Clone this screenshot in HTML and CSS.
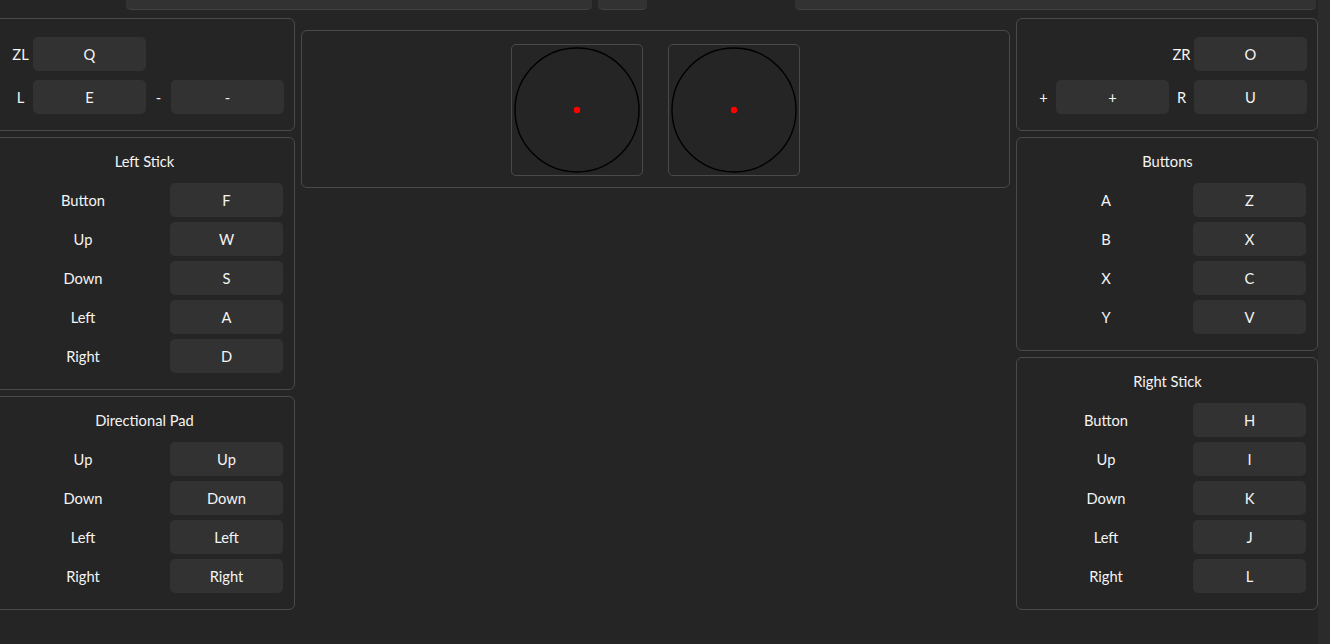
FILE: index.html
```html
<!DOCTYPE html>
<html lang="en">
<head>
    <meta charset="UTF-8">
    <meta name="viewport" content="width=device-width, initial-scale=1.0">
    <title>Controller Mapping</title>
    <link rel="stylesheet" href="styles.css">
</head>
<body>
    <div class="page">
        <div class="top-bar">
            <div class="top-field"></div>
            <div class="top-field"></div>
            <div></div>
            <div class="top-field"></div>
        </div>

        <div class="layout">
            <div class="column">
                <div class="panel shoulder left">
                    <span class="lbl">ZL</span>
                    <div class="key">Q</div>
                    <span></span>
                    <span></span>
                    <span class="lbl">L</span>
                    <div class="key">E</div>
                    <span class="lbl">-</span>
                    <div class="key">-</div>
                </div>

                <div class="panel group">
                    <h3>Left Stick</h3>
                    <div class="rows">
                        <span class="lbl">Button</span><div class="key">F</div>
                        <span class="lbl">Up</span><div class="key">W</div>
                        <span class="lbl">Down</span><div class="key">S</div>
                        <span class="lbl">Left</span><div class="key">A</div>
                        <span class="lbl">Right</span><div class="key">D</div>
                    </div>
                </div>

                <div class="panel group">
                    <h3>Directional Pad</h3>
                    <div class="rows">
                        <span class="lbl">Up</span><div class="key">Up</div>
                        <span class="lbl">Down</span><div class="key">Down</div>
                        <span class="lbl">Left</span><div class="key">Left</div>
                        <span class="lbl">Right</span><div class="key">Right</div>
                    </div>
                </div>
            </div>

            <div class="column center">
                <div class="panel sticks">
                    <div class="stick">
                        <svg viewBox="0 0 130 130" width="130" height="130">
                            <circle cx="65" cy="65" r="62" fill="none" stroke="#000" stroke-width="1.4"/>
                            <circle cx="65" cy="65" r="3.2" fill="#ff0000"/>
                        </svg>
                    </div>
                    <div class="stick">
                        <svg viewBox="0 0 130 130" width="130" height="130">
                            <circle cx="65" cy="65" r="62" fill="none" stroke="#000" stroke-width="1.4"/>
                            <circle cx="65" cy="65" r="3.2" fill="#ff0000"/>
                        </svg>
                    </div>
                </div>
            </div>

            <div class="column">
                <div class="panel shoulder right">
                    <span></span>
                    <span></span>
                    <span class="lbl">ZR</span>
                    <div class="key">O</div>
                    <span class="lbl">+</span>
                    <div class="key">+</div>
                    <span class="lbl">R</span>
                    <div class="key">U</div>
                </div>

                <div class="panel group">
                    <h3>Buttons</h3>
                    <div class="rows">
                        <span class="lbl">A</span><div class="key">Z</div>
                        <span class="lbl">B</span><div class="key">X</div>
                        <span class="lbl">X</span><div class="key">C</div>
                        <span class="lbl">Y</span><div class="key">V</div>
                    </div>
                </div>

                <div class="panel group">
                    <h3>Right Stick</h3>
                    <div class="rows">
                        <span class="lbl">Button</span><div class="key">H</div>
                        <span class="lbl">Up</span><div class="key">I</div>
                        <span class="lbl">Down</span><div class="key">K</div>
                        <span class="lbl">Left</span><div class="key">J</div>
                        <span class="lbl">Right</span><div class="key">L</div>
                    </div>
                </div>
            </div>
        </div>
    </div>
    <div class="scroll-track"></div>
</body>
</html>
```

FILE: styles.css
```css
body {
    margin: 0;
    height: 644px;
    overflow: hidden;
    display: flex;
    background: #252525;
    color: #f4f4f4;
    font-family: "Segoe UI", Lato, "Open Sans", sans-serif;
    font-size: 14.7px;
}
.page {
    flex: 1;
    margin-left: -7px;
    min-width: 0;
}
.scroll-track {
    width: 12px;
    background: #2b2b2b;
}
.top-bar {
    display: grid;
    grid-template-columns: 466px 49px 1fr 521px;
    gap: 6px;
    height: 32px;
    margin-top: -22px;
    padding: 0 2px 0 133px;
}
.top-field {
    background: #323232;
    border-bottom: 1px solid #424242;
    border-radius: 0 0 5px 5px;
}
.layout {
    display: grid;
    grid-template-columns: 302px 1fr 302px;
    gap: 6px;
    margin-top: 8px;
}
.column {
    display: flex;
    flex-direction: column;
    gap: 6px;
}
.column.center {
    padding-top: 12px;
}
.panel {
    border: 1px solid #4a4a4a;
    border-radius: 6px;
}
.key {
    height: 34px;
    line-height: 34px;
    text-align: center;
    background: #323232;
    border-radius: 5px;
}
.lbl {
    text-align: center;
    line-height: 34px;
}
.shoulder {
    display: grid;
    grid-template-columns: 25px 113px 25px 113px;
    justify-content: end;
    row-gap: 9px;
    padding: 18px 10px 16px;
}
.group {
    padding: 13px 11px 16px 12px;
}
.group h3 {
    margin: 0 0 12px;
    font-size: 14.7px;
    font-weight: normal;
    line-height: 20px;
    text-align: center;
}
.rows {
    display: grid;
    grid-template-columns: 1fr 113px;
    column-gap: 10px;
    row-gap: 5px;
}
.sticks {
    display: flex;
    justify-content: center;
    gap: 25px;
    padding: 13px 0 11px;
}
.stick {
    width: 130px;
    height: 130px;
    border: 1px solid #4a4a4a;
    border-radius: 5px;
}
.stick svg {
    display: block;
}
```
